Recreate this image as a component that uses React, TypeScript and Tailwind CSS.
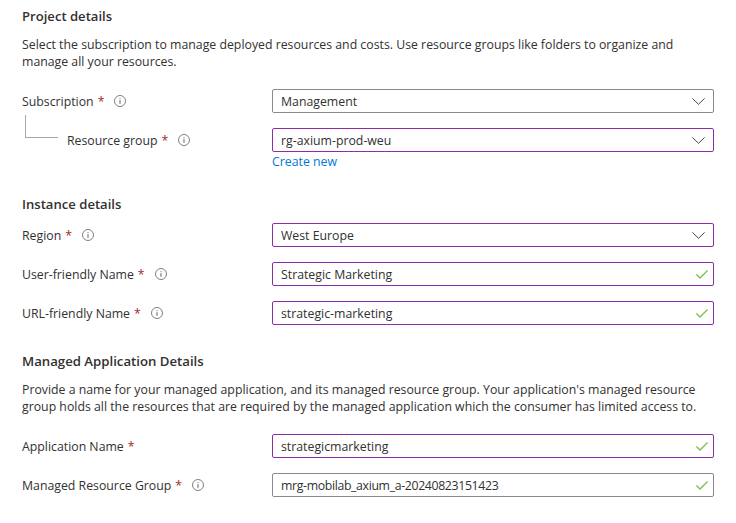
const fontStack = { fontFamily: '"Open Sans", "Noto Sans", sans-serif' };

function InfoIcon() {
  return (
    <svg width="12" height="12" viewBox="0 0 12 12" fill="none" className="shrink-0 text-[#5f5f5f]">
      <circle cx="6" cy="6" r="5.5" stroke="currentColor" strokeWidth="0.8" />
      <rect x="5.5" y="5.2" width="1" height="3.6" fill="currentColor" />
      <rect x="5.5" y="3.2" width="1" height="1" fill="currentColor" />
    </svg>
  );
}

function ChevronIcon() {
  return (
    <svg width="13" height="7" viewBox="0 0 13 7" fill="none" className="shrink-0">
      <path d="M0.4 0.4 L6.5 6.3 L12.6 0.4" stroke="#323130" strokeWidth="0.9" />
    </svg>
  );
}

function CheckIcon() {
  return (
    <svg width="12" height="9" viewBox="0 0 12 9" fill="none" className="shrink-0">
      <path d="M0.4 4.4 L4 8 L11.6 0.5" stroke="#7fba4a" strokeWidth="1.3" />
    </svg>
  );
}

type FieldProps = {
  label: string;
  value: string;
  info?: boolean;
  highlighted?: boolean;
  kind?: "select" | "check";
  indented?: boolean;
  valueClass?: string;
};

function Field({ label, value, info = true, highlighted, kind = "check", indented, valueClass = "" }: FieldProps) {
  return (
    <div className="flex h-6 items-center">
      <div className={`flex w-[250px] shrink-0 items-center ${indented ? "pl-[45px]" : ""}`}>
        <span>{label}</span>
        <span className="ml-1 text-[#a4262c]">*</span>
        {info && (
          <span className="ml-[10px] flex">
            <InfoIcon />
          </span>
        )}
      </div>
      <div
        className={`flex h-6 w-[442px] items-center justify-between rounded-[2px] border bg-white pl-2 ${
          kind === "select" ? "pr-2" : "pr-[5px]"
        } ${highlighted ? "border-[#8f2da8]" : "border-[#8a8a8a]"}`}
      >
        <span className={valueClass}>{value}</span>
        {kind === "select" ? <ChevronIcon /> : <CheckIcon />}
      </div>
    </div>
  );
}

export default function App() {
  return (
    <div
      className="h-[523px] w-[736px] overflow-hidden bg-white px-[22px] pt-[7px] text-[12.3px] leading-[17px] text-[#323130]"
      style={fontStack}
    >
      <section>
        <h2 className="text-[13.1px] leading-[18px] font-semibold">Project details</h2>
        <p className="mt-[11px] w-[680px]">
          Select the subscription to manage deployed resources and costs. Use resource groups like folders to organize and
          manage all your resources.
        </p>
        <div className="relative mt-[19px] flex flex-col gap-[15px]">
          <Field label="Subscription" value="Management" kind="select" />
          <span className="absolute left-[3px] top-[26px] h-[23px] w-[33px] border-b border-l border-[#a6a6a6]" />
          <Field label="Resource group" value="rg-axium-prod-weu" kind="select" highlighted indented />
        </div>
        <a className="ml-[250px] mt-[1px] block text-[#0078d4]">Create new</a>
      </section>

      <section className="mt-[25px]">
        <h2 className="text-[13.1px] leading-[18px] font-semibold">Instance details</h2>
        <div className="mt-[10px] flex flex-col gap-[15px]">
          <Field label="Region" value="West Europe" kind="select" highlighted />
          <Field label="User-friendly Name" value="Strategic Marketing" highlighted />
          <Field label="URL-friendly Name" value="strategic-marketing" highlighted />
        </div>
      </section>

      <section className="mt-[27px]">
        <h2 className="text-[13.2px] leading-[18px] font-semibold">Managed Application Details</h2>
        <p className="mt-[11px] w-[692px]">
          Provide a name for your managed application, and its managed resource group. Your application's managed resource
          group holds all the resources that are required by the managed application which the consumer has limited access to.
        </p>
        <div className="mt-[19px] flex flex-col gap-[15px]">
          <Field label="Application Name" value="strategicmarketing" info={false} highlighted />
          <Field
            label="Managed Resource Group"
            value="mrg-mobilab_axium_a-20240823151423"
            valueClass="tracking-[-0.35px]"
          />
        </div>
      </section>
    </div>
  );
}
